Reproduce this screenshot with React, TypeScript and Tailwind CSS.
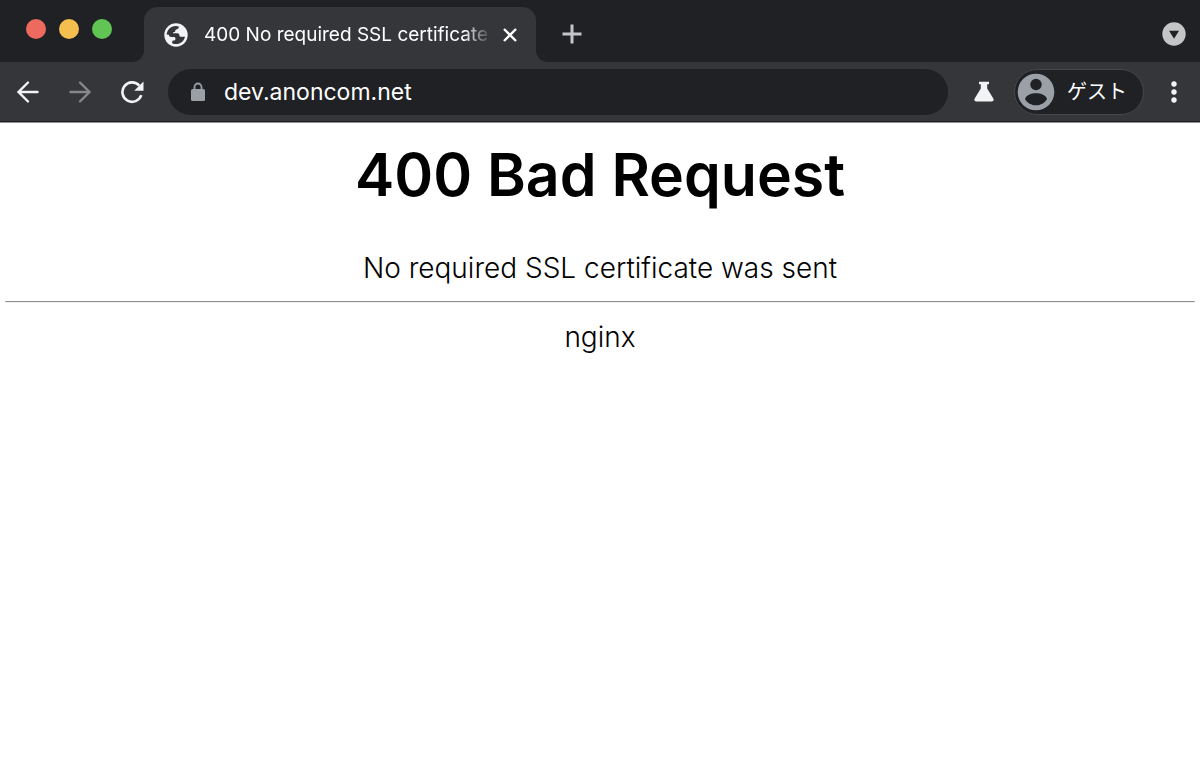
import { useState } from "react";

const lights = [
  { label: "Close window", color: "bg-[#ed6a5e]" },
  { label: "Minimize window", color: "bg-[#f5bf4f]" },
  { label: "Zoom window", color: "bg-[#61c554]" },
];

const iconButton = "flex h-11 w-[52px] shrink-0 items-center justify-center";

const Globe = () => (
  <svg viewBox="0 0 24 24" className="size-6 shrink-0" aria-hidden="true">
    <circle cx="12" cy="12" r="11.7" fill="#f1f3f4" />
    <path
      d="M2.7 11.4C3 6.8 6.8 3 11.6 2.9c1.300 0 2.500.2 3.300.7-.1 1.600-.9 2.600-2.500 2.900-.9.2-1.200.7-1.200 1.500 0 .8-.5 1.200-1.400 1.200-.8 0-1 .4-.8 1.100h4.200c1.500 0 2.200.8 2.200 2 0 1 .6 1.500 1.600 1.500h4c-.9 4.200-4.400 7.300-8.800 7.300-1.500 0-2.900-.3-4.100-.9l.1-1.500c.1-.8.6-1.200 1.400-1.200 1.200 0 1.900-.7 1.900-1.800 0-1.200-.7-1.800-1.900-1.800H7.200c-1.500 0-2.300-.8-2.300-2.200z"
      fill="#35363a"
    />
  </svg>
);

const TabStrip = () => (
  <div className="flex h-[62px] items-start bg-[#202124] pr-[14px] pl-[26px]">
    <div className="flex gap-[13px] pt-[19px]">
      {lights.map((light) => (
        <button key={light.label} aria-label={light.label} className={`size-5 rounded-full ${light.color}`} />
      ))}
    </div>

    <div className="relative mt-[7px] ml-8 flex h-[55px] w-[392px] min-w-0 items-center rounded-t-[14px] bg-[#35363a] pr-4 pl-5">
      {/* flared feet of the active tab */}
      <svg viewBox="0 0 12 12" className="absolute bottom-0 -left-3 size-3" aria-hidden="true">
        <path d="M12 0v12H0C7 12 12 7 12 0z" fill="#35363a" />
      </svg>
      <svg viewBox="0 0 12 12" className="absolute -right-3 bottom-0 size-3" aria-hidden="true">
        <path d="M0 0v12h12C5 12 0 7 0 0z" fill="#35363a" />
      </svg>
      <Globe />
      <span className="ml-4 min-w-0 flex-1 overflow-hidden mask-r-from-90% text-[19px] leading-6 whitespace-nowrap text-white">
        400 No required SSL certificate was sent
      </span>
      <button aria-label="Close tab" className="ml-2 flex size-5 shrink-0 items-center justify-center">
        <svg viewBox="0 0 14 14" className="size-[14px]" stroke="#fff" strokeWidth="2.4" aria-hidden="true">
          <path d="M1 1l12 12M13 1L1 13" />
        </svg>
      </button>
    </div>

    <button aria-label="New tab" className="mt-[18px] ml-5 flex size-8 items-center justify-center">
      <svg viewBox="0 0 20 20" className="size-5" stroke="#c4c5c7" strokeWidth="3" aria-hidden="true">
        <path d="M10 .5v19M.5 10h19" />
      </svg>
    </button>

    <button aria-label="Search tabs" className="mt-[22px] ml-auto">
      <svg viewBox="0 0 24 24" className="size-6" aria-hidden="true">
        <circle cx="12" cy="12" r="11.7" fill="#c4c5c7" />
        <path d="M7 8.8h10L12 16.8z" fill="#202124" />
      </svg>
    </button>
  </div>
);

const Toolbar = () => {
  const [url, setUrl] = useState("dev.anoncom.net");

  return (
    <div className="flex h-[60px] items-center gap-1 border-b border-[#202124] bg-[#35363a] pl-[2px]">
      <div className="flex">
        <button aria-label="Back" className={iconButton}>
          <svg viewBox="0 0 24 24" className="size-6" fill="none" stroke="#f1f3f4" strokeWidth="2.4" strokeLinecap="round" aria-hidden="true">
            <path d="M21.5 12h-19M12 2.5L2.5 12l9.5 9.5" />
          </svg>
        </button>
        <button aria-label="Forward" disabled className={iconButton}>
          <svg viewBox="0 0 24 24" className="size-6" fill="none" stroke="#86878a" strokeWidth="2.4" strokeLinecap="round" aria-hidden="true">
            <path d="M2.5 12h19M12 2.5l9.5 9.5-9.5 9.5" />
          </svg>
        </button>
        <button aria-label="Reload" className={iconButton}>
          <svg viewBox="0 0 24 24" className="size-6" aria-hidden="true">
            <path d="M21.3 15.2A9.7 9.7 0 1 1 19.3 5.6" fill="none" stroke="#f1f3f4" strokeWidth="2.6" />
            <path d="M23.5 1.5v9.3h-9.3z" fill="#f1f3f4" />
          </svg>
        </button>
      </div>

      <div className="ml-[6px] flex h-[46px] min-w-0 flex-1 items-center rounded-full bg-[#202124] pl-[22px]">
        <svg viewBox="0 0 16 20" className="h-5 w-4 shrink-0" aria-hidden="true">
          <path d="M4.5 8V5a3.5 3.5 0 0 1 7 0v3" fill="none" stroke="#9aa0a6" strokeWidth="1.8" />
          <rect x="1" y="7" width="14" height="12" rx="1.5" fill="#9aa0a6" />
        </svg>
        <input
          aria-label="Address"
          value={url}
          onChange={(e) => setUrl(e.target.value)}
          className="ml-[18px] min-w-0 flex-1 bg-transparent text-[23px] leading-7 text-white outline-none"
        />
      </div>

      <button aria-label="Experiments" className={`ml-[6px] ${iconButton}`}>
        <svg viewBox="0 0 20 21" className="h-[21px] w-5" fill="#f1f3f4" aria-hidden="true">
          <path d="M5 .8h10v2.4h-1.800v4.400l6.100 9.900c.9 1.600.1 3-1.600 3H2.300c-1.700 0-2.500-1.400-1.600-3l6.100-9.900V3.200H5z" />
        </svg>
      </button>

      <button className="flex h-[46px] shrink-0 items-center gap-3 rounded-full border border-[#46474b] bg-[#202124] pr-4 pl-[2px] text-xl leading-6 text-white">
        <svg viewBox="0 0 38 38" className="size-[38px]" aria-hidden="true">
          <circle cx="19" cy="19" r="18.3" fill="#9aa0a6" />
          <circle cx="19" cy="11.5" r="5.7" fill="#202124" />
          <path d="M8 26c1-4 6-5.800 11-5.800S29 22 30 26c-2.200 4-6.400 6.300-11 6.300S10.200 30 8 26z" fill="#202124" />
        </svg>
        ゲスト
      </button>

      <button aria-label="Menu" className={iconButton}>
        <svg viewBox="0 0 6 22" className="h-[22px] w-[6px]" fill="#f1f3f4" aria-hidden="true">
          <circle cx="3" cy="3" r="2.7" />
          <circle cx="3" cy="11" r="2.7" />
          <circle cx="3" cy="19" r="2.7" />
        </svg>
      </button>
    </div>
  );
};

const App = () => (
  <div className="min-h-screen bg-white font-['Inter','Noto_Sans_CJK_JP',sans-serif]">
    <header className="border-b border-[#8e8e90]">
      <TabStrip />
      <Toolbar />
    </header>

    <main className="px-[5px] pt-4 text-center text-[28px] leading-[42px] font-[350] text-black">
      <h1 className="text-[59px] leading-[72px] font-semibold">400 Bad Request</h1>
      <p className="mt-9">No required SSL certificate was sent</p>
      <hr className="mt-3 mb-[13px] border border-[#eeeeee] border-t-[#8e8e8e]" />
      <p>nginx</p>
    </main>
  </div>
);

export default App;
